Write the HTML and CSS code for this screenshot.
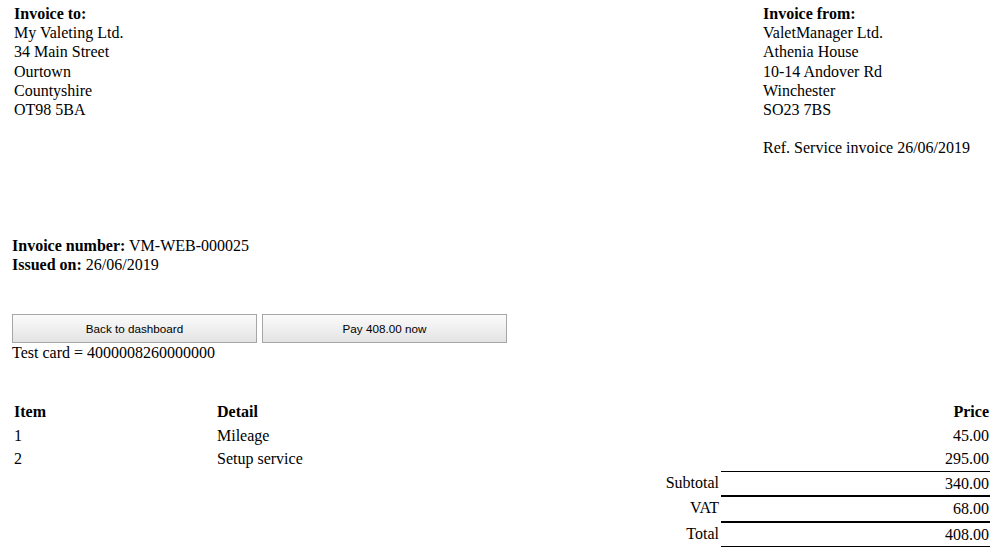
FILE: index.html
```html
<!DOCTYPE html>
<html lang="en">
<head>
    <meta charset="UTF-8">
    <meta name="viewport" content="width=device-width, initial-scale=1.0">
    <title>Invoice VM-WEB-000025</title>
    <link rel="stylesheet" href="styles.css">
</head>
<body>
<div class="page">
    <div class="addresses">
        <div class="address-to">
            <strong>Invoice to:</strong><br>
            My Valeting Ltd.<br>
            34 Main Street<br>
            Ourtown<br>
            Countyshire<br>
            OT98 5BA
        </div>
        <div class="address-from">
            <strong>Invoice from:</strong><br>
            ValetManager Ltd.<br>
            Athenia House<br>
            10-14 Andover Rd<br>
            Winchester<br>
            SO23 7BS<br>
            <br>
            Ref. Service invoice 26/06/2019
        </div>
    </div>

    <div class="invoice-meta">
        <strong>Invoice number:</strong> VM-WEB-000025<br>
        <strong>Issued on:</strong> 26/06/2019
    </div>

    <div class="actions">
        <button type="button" id="backButton">Back to dashboard</button>
        <button type="button" id="payButton">Pay 408.00 now</button>
    </div>
    <div class="test-card">Test card = 4000008260000000</div>

    <table class="items">
        <thead>
            <tr>
                <th class="col-item">Item</th>
                <th class="col-detail">Detail</th>
                <th class="col-label"></th>
                <th class="col-price">Price</th>
            </tr>
        </thead>
        <tbody>
            <tr>
                <td>1</td>
                <td>Mileage</td>
                <td></td>
                <td class="price">45.00</td>
            </tr>
            <tr>
                <td>2</td>
                <td>Setup service</td>
                <td></td>
                <td class="price">295.00</td>
            </tr>
            <tr class="subtotal">
                <td></td>
                <td></td>
                <td class="label">Subtotal</td>
                <td class="price">340.00</td>
            </tr>
            <tr class="vat">
                <td></td>
                <td></td>
                <td class="label">VAT</td>
                <td class="price">68.00</td>
            </tr>
            <tr class="total">
                <td></td>
                <td></td>
                <td class="label">Total</td>
                <td class="price">408.00</td>
            </tr>
        </tbody>
    </table>
</div>
</body>
</html>
```

FILE: styles.css
```css
body {
    font-family: "Liberation Serif", "Times New Roman", serif;
    font-size: 16px;
    line-height: 1.2;
    color: #000;
    background-color: #fff;
    margin: 0;
}

.page {
    padding: 4px 8px 0 12px;
}

.addresses {
    display: flex;
    justify-content: space-between;
}

.address-to {
    padding-left: 2px;
}

.address-from {
    width: 227px;
}

.invoice-meta {
    margin-top: 78px;
}

.actions {
    display: flex;
    gap: 5px;
    margin-top: 40px;
}

.actions button {
    width: 245px;
    height: 29px;
    padding: 0;
    font-family: "Liberation Sans", Arial, sans-serif;
    font-size: 11.7px;
    color: #000;
    background: linear-gradient(#fbfbfb, #e3e3e3);
    border: 1px solid #a6a6a6;
    border-radius: 0;
    cursor: pointer;
}

.items {
    width: 978px;
    margin-top: 38px;
    table-layout: fixed;
    border-collapse: separate;
    border-spacing: 0;
}

.items th,
.items td {
    box-sizing: border-box;
    padding: 2px;
    line-height: 19.5px;
    text-align: left;
    vertical-align: middle;
}

.items th {
    font-weight: bold;
}

.col-item {
    width: 203px;
}

.col-label {
    width: 110px;
}

.col-price {
    width: 269px;
}

.items th.col-price,
.items td.price,
.items td.label {
    text-align: right;
}

.items th.col-price,
.items td.price {
    padding-right: 1px;
}

.subtotal .price {
    border-top: 1px solid #000;
}

.vat .price,
.total .price {
    border-top: 2px solid #000;
}

.total .price {
    border-bottom: 1px solid #000;
}
```
